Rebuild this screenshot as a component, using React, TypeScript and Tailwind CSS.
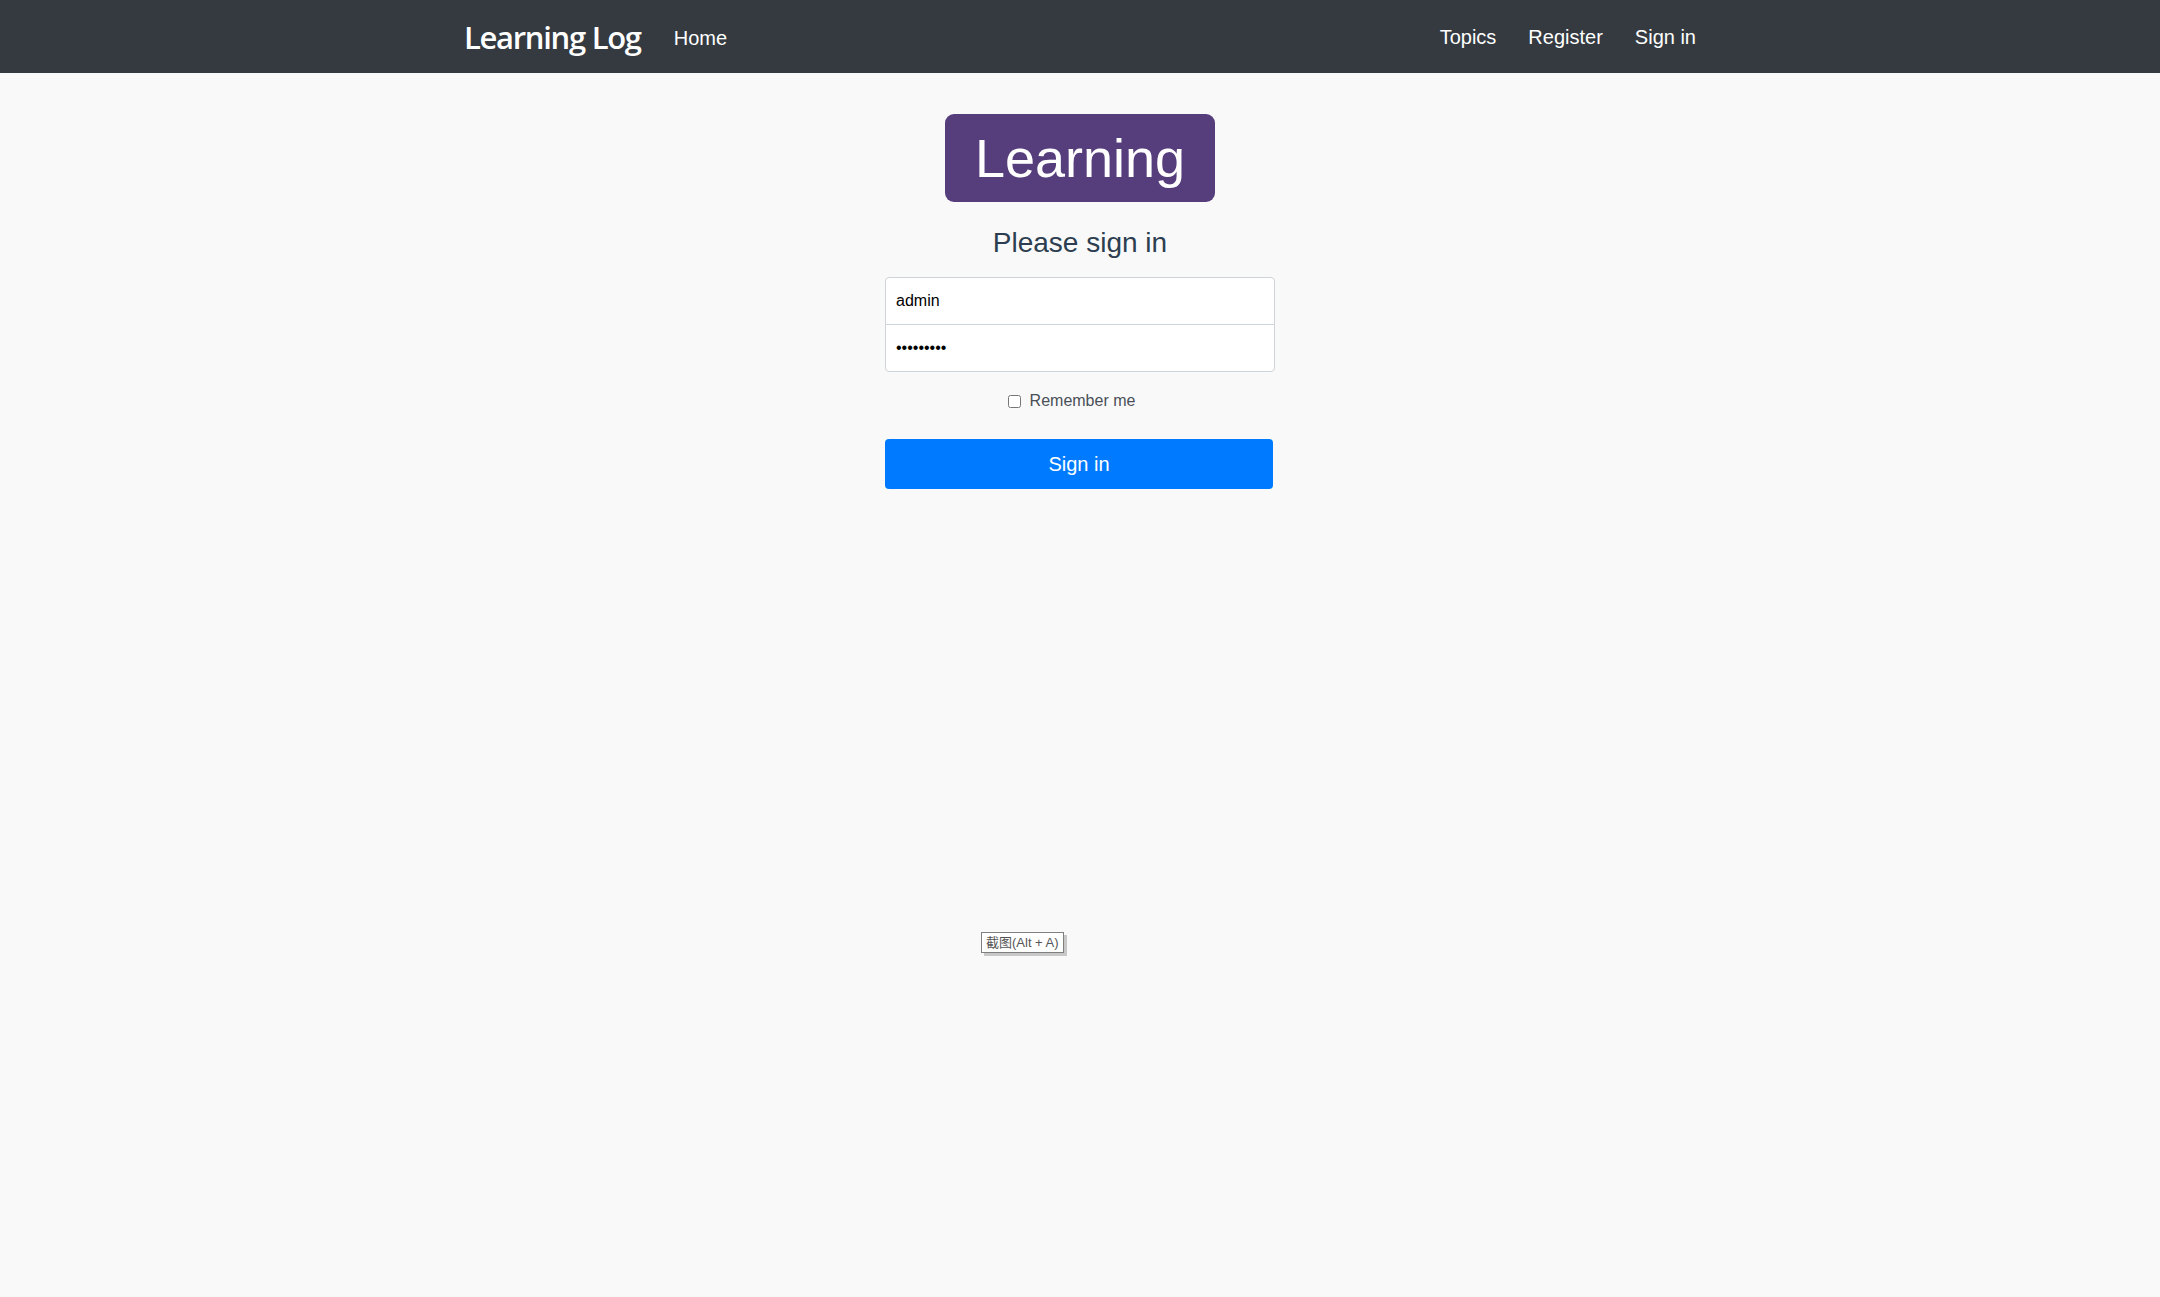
import { useState } from 'react'

const NAV_LINKS = ['Topics', 'Register', 'Sign in']

export default function App() {
  const [username, setUsername] = useState('admin')
  const [password, setPassword] = useState('123456789')
  const [remember, setRemember] = useState(false)

  return (
    <div className="relative min-h-[1297px] bg-[#f9f9f9] font-['Liberation_Sans',Arial,sans-serif]">
      {/* ナビゲーションバー */}
      <nav className="h-[73px] bg-[#343a40]">
        <div className="mx-auto flex h-full w-[1260px] items-center px-[14px]">
          <a href="#" className="mr-[33px] pt-[2px] font-['Open_Sans',sans-serif] text-[31px] font-semibold tracking-[-1.3px] text-white">
            Learning Log
          </a>
          <a href="#" className="pt-[3px] text-[20px] text-white">
            Home
          </a>
          <div className="ml-auto flex items-center gap-[32px] pt-[1px]">
            {NAV_LINKS.map((label) => (
              <a key={label} href="#" className="text-[20px] text-white">
                {label}
              </a>
            ))}
          </div>
        </div>
      </nav>

      {/* サインインフォーム */}
      <main className="flex flex-col items-center pt-[41px]">
        <div className="flex h-[88px] w-[270px] items-center justify-center rounded-[9px] bg-[#563d7c] text-[54px] leading-none text-white">
          Learning
        </div>

        <h1 className="mt-[23px] text-[28px] leading-[36px] text-[#2c3e50]">Please sign in</h1>

        <form className="mt-[16px] flex w-[390px] flex-col" onSubmit={(e) => e.preventDefault()}>
          <input
            type="text"
            value={username}
            onChange={(e) => setUsername(e.target.value)}
            className="h-[48px] rounded-t-[4px] border border-[#ced4da] bg-white px-[10px] text-[16px] text-black outline-none"
          />
          <input
            type="password"
            value={password}
            onChange={(e) => setPassword(e.target.value)}
            className="-mt-px h-[48px] rounded-b-[4px] border border-[#ced4da] bg-white px-[10px] text-[16px] text-black outline-none"
          />

          <label className="mt-[17px] flex items-center justify-center gap-[9px] pr-[17px] text-[16px] text-[#495057]">
            <input
              type="checkbox"
              checked={remember}
              onChange={(e) => setRemember(e.target.checked)}
              className="h-[13px] w-[13px]"
            />
            Remember me
          </label>

          <button
            type="submit"
            className="mt-[26px] h-[50px] w-[388px] rounded-[4px] bg-[#007bff] text-[20px] text-white"
          >
            Sign in
          </button>
        </form>
      </main>

      {/* スクリーンショットツールのツールチップ */}
      <div className="absolute left-[981px] top-[932px] border border-[#808080] bg-white px-[4px] py-0 text-[13px] leading-[19px] text-[#555] shadow-[3px_3px_0_#c8c8c8] font-['Liberation_Sans','Noto_Sans_CJK_SC',sans-serif]">
        截图(Alt + A)
      </div>
    </div>
  )
}
